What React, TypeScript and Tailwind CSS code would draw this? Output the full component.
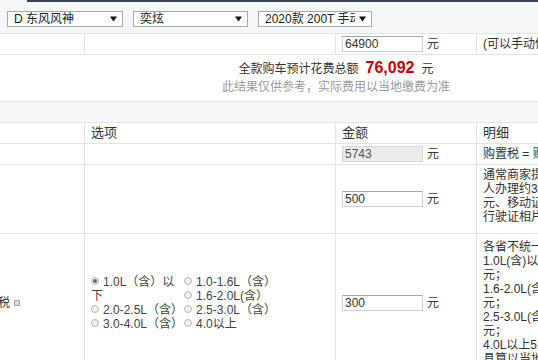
import React from "react";

function Arrow() {
  return (
    <svg width="7" height="6" viewBox="0 0 7 6" className="shrink-0">
      <path d="M0 0.5h7L3.5 5.5z" fill="#111" />
    </svg>
  );
}

function FakeSelect({ label, className }: { label: string; className: string }) {
  return (
    <div
      className={`flex h-[16px] items-center border border-[#a9a9a9] bg-white pl-[6px] pr-[5px] text-[12px] leading-[14px] text-[#222] ${className}`}
    >
      <span className="mr-[4px] flex-1 overflow-hidden whitespace-nowrap">{label}</span>
      <Arrow />
    </div>
  );
}

function Amount({ value, disabled }: { value: string; disabled?: boolean }) {
  return (
    <div className="flex items-center">
      <input
        readOnly
        defaultValue={value}
        className={
          disabled
            ? "h-[16px] w-[81px] border border-[#d6d6d6] bg-[#ebebeb] px-[2px] text-[12px] leading-[14px] text-[#555] outline-none"
            : "h-[16px] w-[81px] border border-[#cfcfcf] border-t-[#a8a8a8] bg-white px-[2px] text-[12px] leading-[14px] text-[#333] outline-none"
        }
      />
      <span className="ml-[4px] text-[12px] text-[#333]">元</span>
    </div>
  );
}

function Radio({ checked }: { checked?: boolean }) {
  return (
    <span className="relative -top-[1px] mr-[4px] inline-flex h-[8px] w-[8px] items-center justify-center rounded-full border border-[#b8b8b8] bg-[#efefef] align-middle">
      {checked && <span className="h-[4px] w-[4px] rounded-full bg-[#666]" />}
    </span>
  );
}

const options = [
  "1.0L（含）以下",
  "1.0-1.6L（含）",
  "1.6-2.0L(含）",
  "2.0-2.5L（含）",
  "2.5-3.0L（含）",
  "3.0-4.0L（含）",
  "4.0以上",
];

export default function App() {
  const row = "ml-[-60px] flex w-[637px] border-b border-[#e4e4e4] text-[12px] text-[#333]";
  const c1 = "flex w-[145px] shrink-0 items-center border-r border-[#e4e4e4] pl-[10px] whitespace-nowrap";
  const c2 = "flex w-[251px] shrink-0 items-center border-r border-[#e4e4e4] pl-[6px]";
  const c3 = "flex w-[141px] shrink-0 items-center border-r border-[#e4e4e4] pl-[6px]";
  const c4 = "flex w-[100px] shrink-0 items-center pl-[6px] whitespace-nowrap";

  return (
    <div className="h-[360px] w-[538px] overflow-hidden bg-white font-['Liberation_Sans','Noto_Sans_CJK_SC',sans-serif]">
      {/* model pickers */}
      <div className="h-[34px] border-b border-[#e4e4e4] bg-[#f5f6f8]">
        <div className="ml-[27px] h-[2px] bg-[#3b4557]" />
        <div className="mt-[9px] flex gap-[10px] pl-[7px]">
          <FakeSelect label="D 东风风神" className="w-[116px]" />
          <FakeSelect label="奕炫" className="w-[115px]" />
          <FakeSelect label="2020款 200T 手动舒适型" className="w-[114px] pl-[4px] pr-[4px]" />
        </div>
      </div>

      <div className={`${row} h-[21px]`}>
        <div className={c1}>裸车价格</div>
        <div className={c2} />
        <div className={c3}>
          <Amount value="64900" />
        </div>
        <div className={c4}>(可以手动修改)</div>
      </div>

      {/* total */}
      <div className="h-[47px] border-b border-[#e4e4e4] pl-[134px] pt-[3px] text-center text-[12px]">
        <div className="h-[20px] leading-[20px] text-[#333]">
          全款购车预计花费总额
          <span className="mx-[7px] text-[16px] font-bold text-[#c80000]">76,092</span>
          元
        </div>
        <div className="h-[18px] leading-[18px] text-[#9a9a9a]">此结果仅供参考，实际费用以当地缴费为准</div>
      </div>

      <div className="h-[21px] border-b border-[#e4e4e4] bg-[#f7f8fa]" />

      <div className={`${row} h-[21px] text-[13px]`}>
        <div className={c1}>项目</div>
        <div className={c2}>选项</div>
        <div className={c3}>金额</div>
        <div className={c4}>明细</div>
      </div>

      <div className={`${row} h-[21px]`}>
        <div className={c1}>购置税</div>
        <div className={c2} />
        <div className={c3}>
          <Amount value="5743" disabled />
        </div>
        <div className={c4}>购置税 = 购车款/(1+13%)×10%</div>
      </div>

      <div className={`${row} h-[69px]`}>
        <div className={c1}>上牌费用</div>
        <div className={c2} />
        <div className={c3}>
          <Amount value="500" />
        </div>
        <div className={`${c4} leading-[14px]`}>
          <div className="-mt-[6px]">
            <div>通常商家提供上牌服务，个</div>
            <div>人办理约373元，号牌费125</div>
            <div>元、移动证5元、</div>
            <div>行驶证相片费用等</div>
          </div>
        </div>
      </div>

      <div className={`${row} h-[138px]`}>
        <div className={c1}>
          车船使用税
          <span className="ml-[4px] inline-block h-[6px] w-[6px] rounded-[1px] border border-[#a0a0a0] bg-[#dcdcdc]" />
        </div>
        <div className={c2}>
          <div className="grid grid-cols-[93px_auto] leading-[14px] text-[#444]">
            {options.map((o, i) => (
              <div key={o} className={i === 0 ? "row-span-2" : "whitespace-nowrap"}>
                <Radio checked={i === 0} />
                {o}
              </div>
            ))}
          </div>
        </div>
        <div className={c3}>
          <Amount value="300" />
        </div>
        <div className={`${c4} leading-[14px]`}>
          <div>
            <div>各省不统一，以下为参考</div>
            <div>1.0L(含)以下300</div>
            <div>元；</div>
            <div>1.6-2.0L(含)420</div>
            <div>元；</div>
            <div>2.5-3.0L(含)900</div>
            <div>元；</div>
            <div>4.0L以上5280元；</div>
            <div>具算以当地为准</div>
          </div>
        </div>
      </div>
    </div>
  );
}
